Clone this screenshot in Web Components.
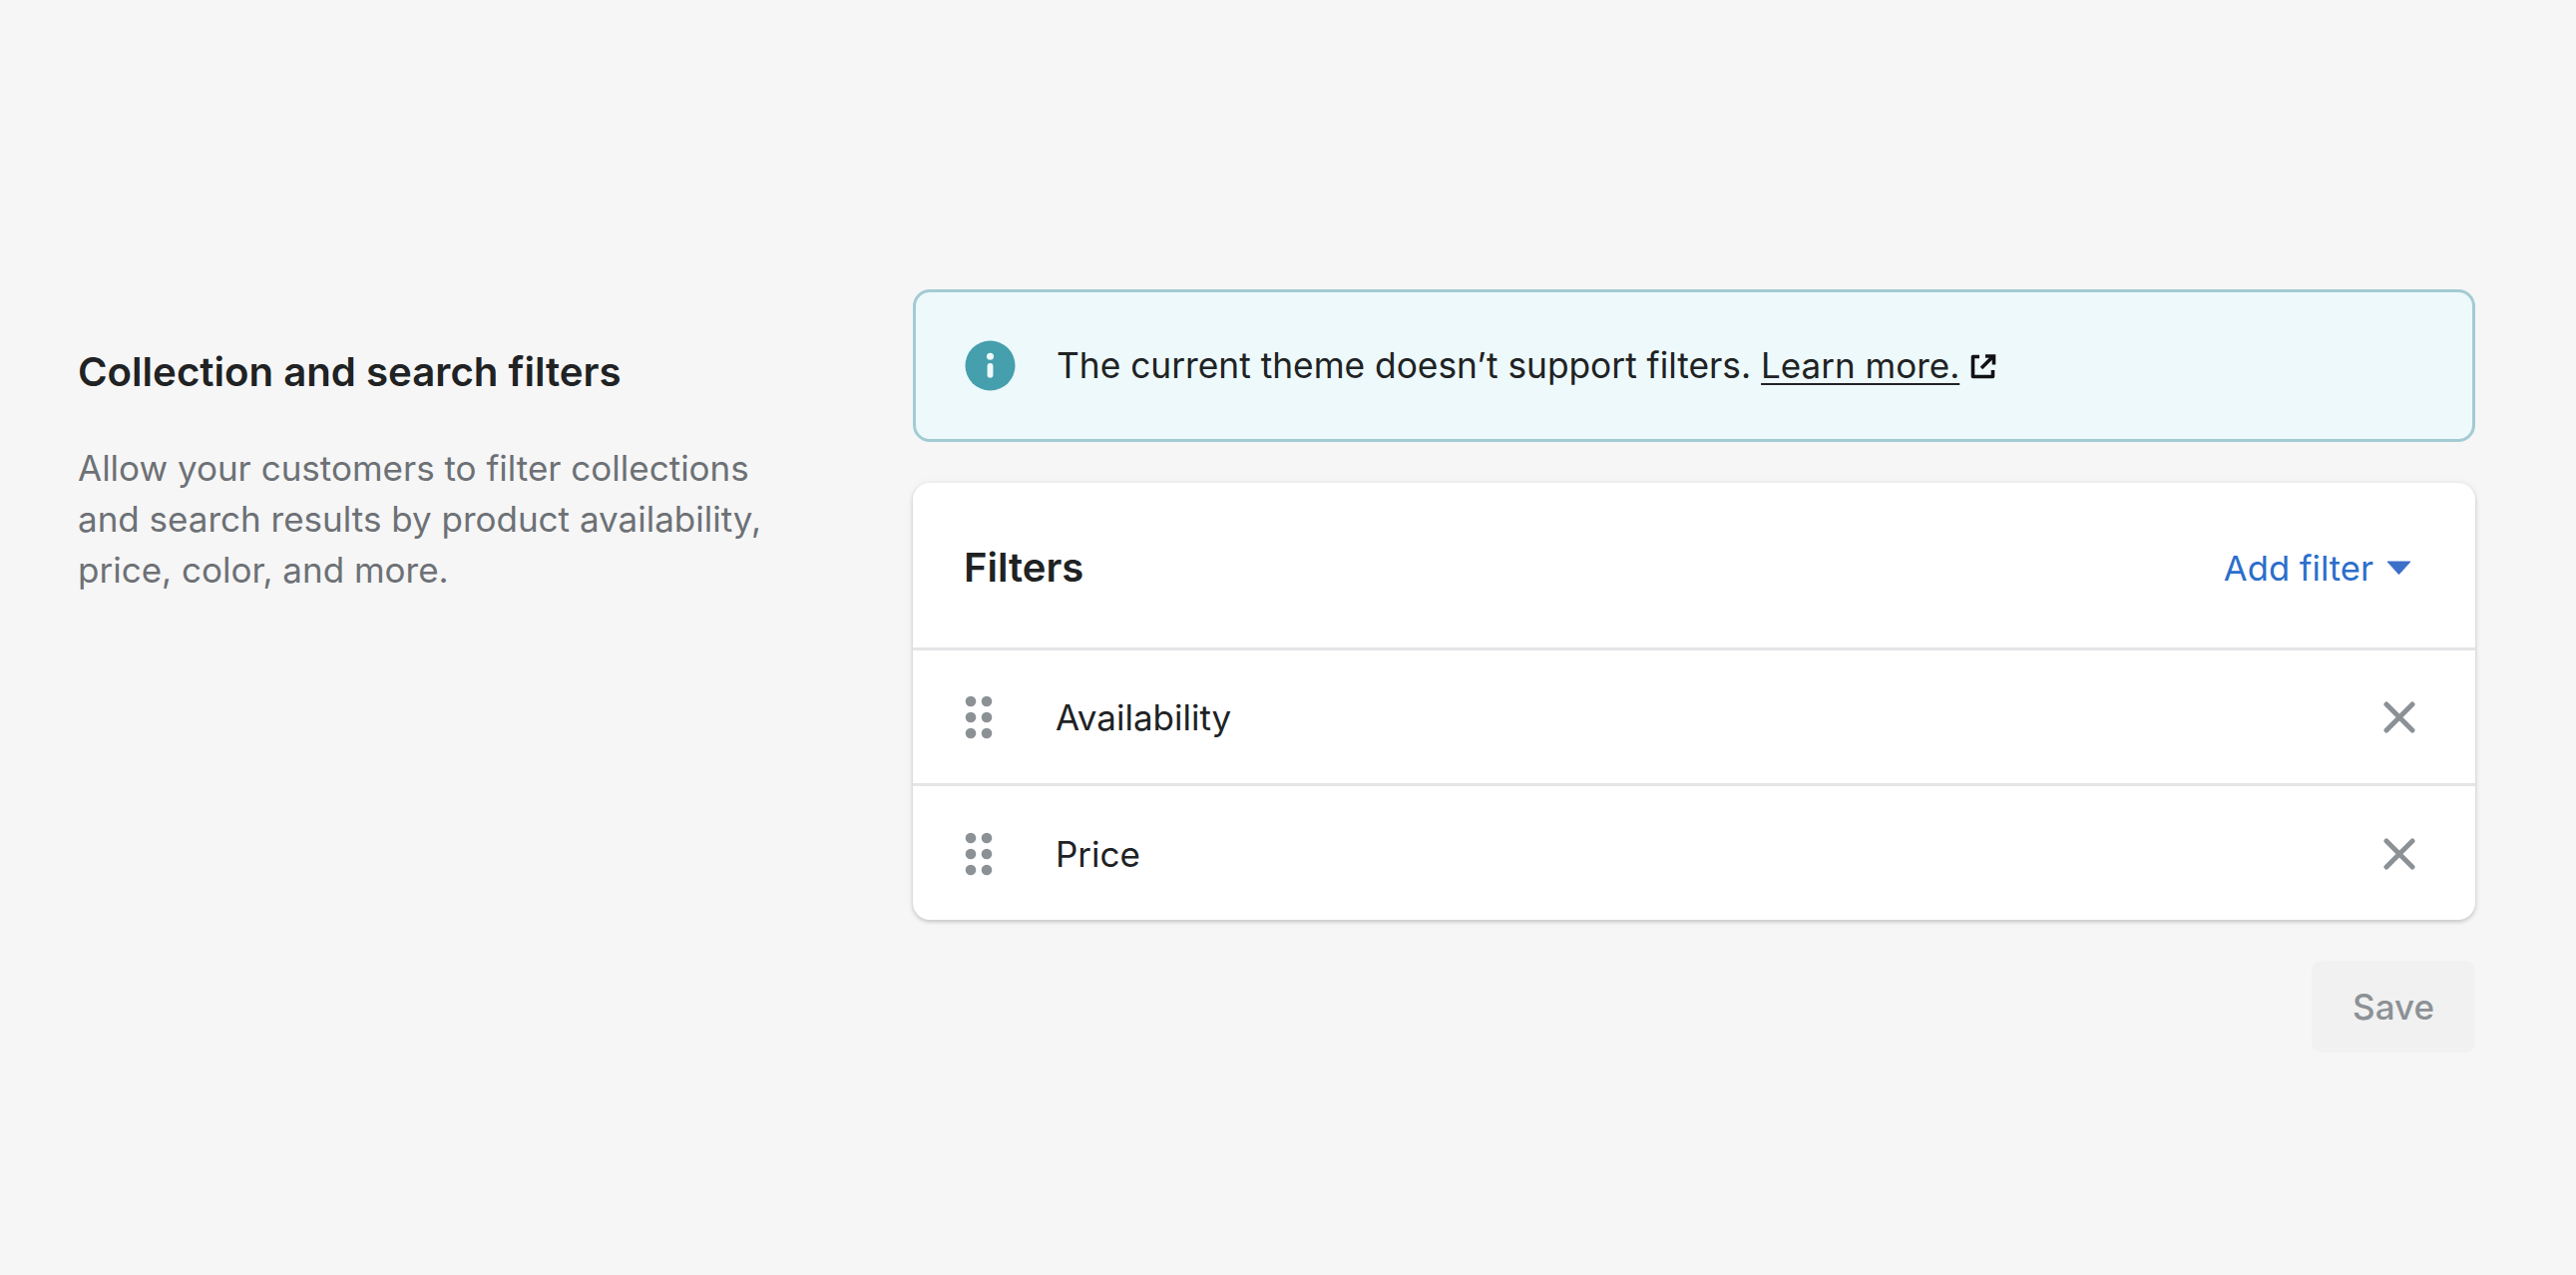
<!DOCTYPE html>
<html>
<head>
<meta charset="utf-8">
<title>Collection and search filters</title>
<style>
  html, body { margin: 0; height: 100%; }
  body { background: #f6f6f7; font-family: Inter, "Liberation Sans", sans-serif; color: #202223; }
</style>
</head>
<body>
<settings-page>
  <settings-intro slot="intro" heading="Collection and search filters">
    Allow your customers to filter collections and search results by product availability, price, color, and more.
  </settings-intro>
  <info-banner>
    The current theme doesn’t support filters.
    <a slot="link">Learn more.</a>
  </info-banner>
  <filter-card heading="Filters" action="Add filter">
    <filter-row>Availability</filter-row>
    <filter-row>Price</filter-row>
  </filter-card>
  <save-button>Save</save-button>
</settings-page>

<script>
// page frame: description on the left, settings on the right
class SettingsPage extends HTMLElement {
    constructor() {
        super();
        this.attachShadow({ mode: 'open' });
        this.shadowRoot.innerHTML = `
            <style>
                :host {
                    display: grid;
                    grid-template-columns: 837px 1566px;
                    box-sizing: border-box;
                    width: 2582px;
                    height: 1278px;
                    padding: 290px 101px 0 78px;
                }
                .main {
                    display: flex;
                    flex-direction: column;
                    gap: 41px;
                }
            </style>
            <slot name="intro"></slot>
            <div class="main"><slot></slot></div>
        `;
    }
}

class SettingsIntro extends HTMLElement {
    constructor() {
        super();
        this.attachShadow({ mode: 'open' });
        this.shadowRoot.innerHTML = `
            <style>
                :host { display: block; padding-top: 58px; }
                h2 {
                    margin: 0 0 46px;
                    font-size: 40.2px;
                    line-height: 50px;
                    font-weight: 600;
                    color: #202223;
                }
                p {
                    margin: 0;
                    width: 700px;
                    font-size: 35px;
                    line-height: 51px;
                    color: #6d7175;
                }
            </style>
            <h2>${this.getAttribute('heading') || ''}</h2>
            <p><slot></slot></p>
        `;
    }
}

class InfoBanner extends HTMLElement {
    constructor() {
        super();
        this.attachShadow({ mode: 'open' });
        this.shadowRoot.innerHTML = `
            <style>
                :host {
                    display: flex;
                    align-items: center;
                    box-sizing: border-box;
                    height: 153px;
                    padding: 0 49px;
                    background: #edf9fb;
                    border: 3px solid #a3cbd3;
                    border-radius: 17px;
                    font-size: 35.3px;
                    color: #202223;
                }
                svg.info { flex: none; width: 51px; height: 51px; margin-right: 41px; }
                .text { padding-bottom: 1px; }
                ::slotted(a) { font-size: 35px; color: #202223; text-decoration: underline; text-underline-offset: 5px; text-decoration-thickness: 2px; }
                .link { white-space: nowrap; }
                svg.ext { width: 26px; height: 26px; margin-left: 11px; vertical-align: -1px; }
            </style>
            <svg class="info" viewBox="0 0 52 52">
                <circle cx="26" cy="26" r="25.5" fill="#459fac"/>
                <circle cx="26" cy="16.5" r="3.6" fill="#edf9fb"/>
                <rect x="23" y="23.5" width="6" height="15" rx="3" fill="#edf9fb"/>
            </svg>
            <span class="text"><slot></slot> <span class="link"><slot name="link"></slot><svg class="ext" viewBox="0 0 26 26" fill="none" stroke="#111213" stroke-width="3.6"><path d="M9 3.500H2.500v20h20V17" stroke-linejoin="round"/><path d="M15 3H23.500V11.500"/><path d="M23 3L11 15"/></svg></span></span>
        `;
    }
}

class FilterCard extends HTMLElement {
    constructor() {
        super();
        this.attachShadow({ mode: 'open' });
        this.shadowRoot.innerHTML = `
            <style>
                :host {
                    display: block;
                    background: #fff;
                    border-radius: 17px;
                    box-shadow: 0 0 8px rgba(23,24,24,.05), 0 2px 4px rgba(0,0,0,.18);
                    overflow: hidden;
                }
                header {
                    display: flex;
                    align-items: center;
                    justify-content: space-between;
                    height: 165px;
                    padding: 3px 64px 0 51px;
                    box-sizing: border-box;
                }
                h3 { margin: 0; font-size: 40px; font-weight: 600; color: #202223; }
                .action { display: flex; align-items: center; gap: 13px; padding-top: 1px; font-size: 34.6px; color: #2c6ecb; }
                .caret { width: 25px; height: 14px; }
                ::slotted(filter-row:last-child) { height: 137px; padding-top: 1px; }
            </style>
            <header>
                <h3>${this.getAttribute('heading') || ''}</h3>
                <span class="action">${this.getAttribute('action') || ''}
                    <svg class="caret" viewBox="0 0 25 14"><path d="M1 1h23l-11.500 12.500z" fill="#3c6fca" stroke="#3c6fca" stroke-linejoin="round"/></svg>
                </span>
            </header>
            <slot></slot>
        `;
    }
}

class FilterRow extends HTMLElement {
    constructor() {
        super();
        this.attachShadow({ mode: 'open' });
        this.shadowRoot.innerHTML = `
            <style>
                :host {
                    display: flex;
                    align-items: center;
                    box-sizing: border-box;
                    height: 136px;
                    padding: 0 60px 0 53px;
                    border-top: 3px solid #e4e5e7;
                    font-size: 35px;
                    color: #202223;
                }
                .grip { flex: none; width: 26px; height: 42px; margin-right: 64px; overflow: visible; }
                .label { flex: 1; }
                .close { flex: none; width: 32px; height: 32px; }
            </style>
            <svg class="grip" viewBox="0 0 26 42" fill="#8c9196">
                <circle cx="5" cy="5" r="5.300"/><circle cx="21" cy="5" r="5.300"/>
                <circle cx="5" cy="21" r="5.300"/><circle cx="21" cy="21" r="5.300"/>
                <circle cx="5" cy="37" r="5.300"/><circle cx="21" cy="37" r="5.300"/>
            </svg>
            <span class="label"><slot></slot></span>
            <svg class="close" viewBox="0 0 32 32" fill="none" stroke="#8c9196" stroke-width="5" stroke-linecap="round">
                <path d="M3 3L29 29M29 3L3 29"/>
            </svg>
        `;
    }
}

class SaveButton extends HTMLElement {
    constructor() {
        super();
        this.attachShadow({ mode: 'open' });
        this.shadowRoot.innerHTML = `
            <style>
                :host {
                    display: flex;
                    align-items: center;
                    justify-content: center;
                    align-self: flex-end;
                    box-sizing: border-box;
                    width: 164px;
                    height: 92px;
                    background: #f1f1f1;
                    border-radius: 10px;
                    font-size: 35px;
                    font-weight: 500;
                    color: #8c9196;
                }
            </style>
            <slot></slot>
        `;
    }
}

customElements.define('settings-page', SettingsPage);
customElements.define('settings-intro', SettingsIntro);
customElements.define('info-banner', InfoBanner);
customElements.define('filter-card', FilterCard);
customElements.define('filter-row', FilterRow);
customElements.define('save-button', SaveButton);
</script>
</body>
</html>
